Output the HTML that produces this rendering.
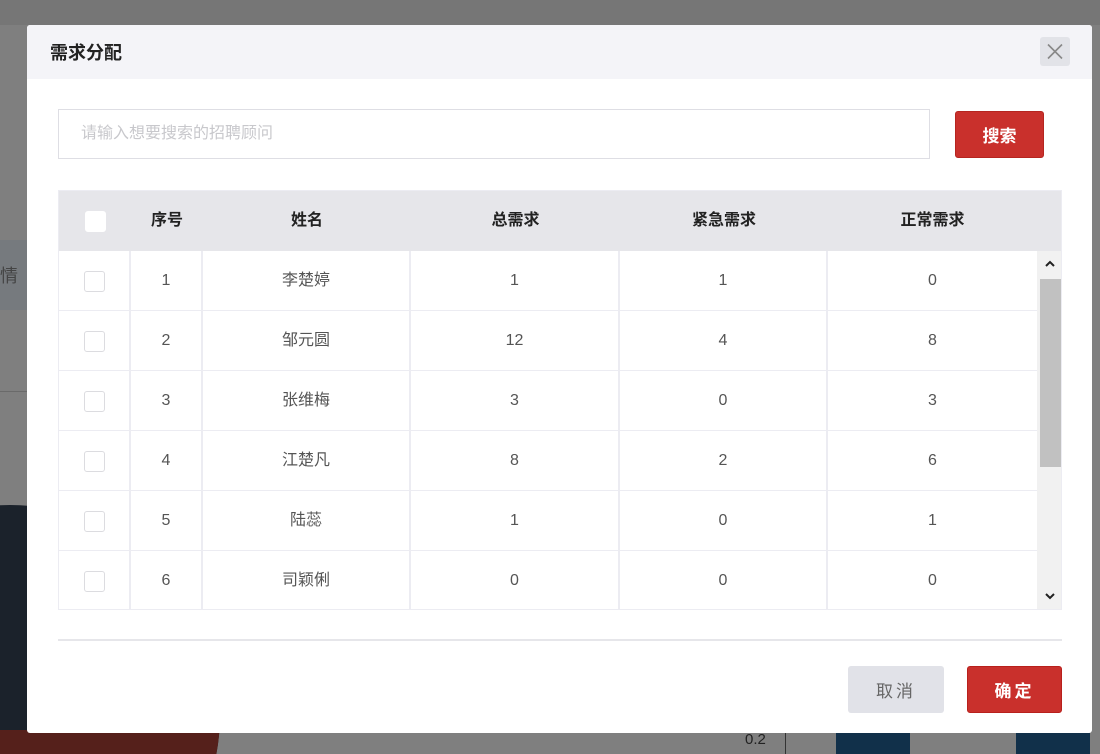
<!DOCTYPE html>
<html style="width:1100px;height:754px;overflow:hidden"><head><meta charset="utf-8"><style>
*{box-sizing:border-box;margin:0;padding:0}
body{width:1100px;height:754px;overflow:hidden;background:#7f7f7f;position:relative;font-family:"Liberation Sans","Noto Sans CJK SC",sans-serif}
.abs{position:absolute}
#wrap{position:absolute;left:0;top:0;width:1100px;height:754px;overflow:hidden}
.modal{left:27px;top:25px;width:1065px;height:708px;background:#fff;border-radius:3px}
.hd{left:0;top:0;width:1065px;height:54px;background:#f4f4f8;border-radius:3px 3px 0 0}
.cell{position:absolute;display:flex;align-items:center;justify-content:center;font-size:16px;color:#555;line-height:1}
.cb{width:21px;height:21px;border:1px solid #dcdce0;border-radius:3px;background:#fff}
</style></head><body>
<div id="wrap">
<div class="abs" style="left:0;top:0;width:1100px;height:25px;background:#767676"></div>
<div class="abs" style="left:0;top:240px;width:27px;height:70px;background:#767a7e"></div>
<div class="abs" style="left:0;top:264px;font-size:18px;line-height:24px;color:#444;">情</div>
<div class="abs" style="left:0;top:391px;width:27px;height:1px;background:#6a6a6a"></div>
<div class="abs" style="left:-200px;top:505px;width:420px;height:249px;overflow:hidden"><div class="abs" style="left:0;top:0;width:420px;height:420px;border-radius:50%;background:#1b222b;overflow:hidden"><div class="abs" style="left:0;top:225px;width:420px;height:200px;background:#55201b"></div></div></div>
<div class="abs" style="left:785px;top:733px;width:1px;height:21px;background:#333"></div>
<div class="abs" style="left:745px;top:731px;font-size:15px;line-height:18px;color:#222">0.2</div>
<div class="abs" style="left:836px;top:733px;width:74px;height:21px;background:#11304a"></div>
<div class="abs" style="left:1016px;top:733px;width:74px;height:21px;background:#11304a"></div>

<div class="abs modal">
 <div class="abs hd"></div>
 <div class="abs" style="left:23px;top:16px;font-size:18px;font-weight:bold;color:#222;line-height:24px">需求分配</div>
 <div class="abs" style="left:1013px;top:12px;width:30px;height:29px;background:#e2e3e8;border-radius:3px">
  <svg width="30" height="29"><path d="M8 7.5L22 21.5M22 7.5L8 21.5" stroke="#888" stroke-width="1.6"/></svg></div>
 <div class="abs" style="left:31px;top:84px;width:872px;height:50px;border:1px solid #dedee4;padding-left:22px;line-height:48px;font-size:16px;color:#c8c8cc">请输入想要搜索的招聘顾问</div>
 <div class="abs" style="left:928px;top:86px;width:89px;height:47px;background:#c9302c;border:1px solid #b52520;border-radius:3px;color:#fff;font-size:17px;font-weight:bold;display:flex;align-items:center;justify-content:center">搜索</div>

 <div class="abs" style="left:31px;top:165px;width:1004px;height:420px;border:1px solid #ececf2;overflow:hidden">
  <div class="abs" style="left:0;top:0;width:1004px;height:60px;background:#e6e6ea"></div>
  <div class="abs" style="left:978px;top:60px;width:26px;height:360px;background:#f1f1f1"></div>
  <div class="abs" style="left:981px;top:88px;width:21px;height:188px;background:#c1c1c1"></div>
  <svg class="abs" style="left:982px;top:66px" width="18" height="14"><path d="M5 9L9 5L13 9" stroke="#222" stroke-width="2" fill="none"/></svg>
  <svg class="abs" style="left:982px;top:398px" width="18" height="14"><path d="M5 5L9 9L13 5" stroke="#222" stroke-width="2" fill="none"/></svg>
  <div id="t"></div>
 </div>
 <div class="abs" style="left:31px;top:614px;width:1004px;height:2px;background:#e6e6ea"></div>
 <div class="abs" style="left:821px;top:641px;width:96px;height:47px;background:#e1e2e8;border-radius:3px;color:#666;font-size:17px;letter-spacing:3px;display:flex;align-items:center;justify-content:center">取消</div>
 <div class="abs" style="left:940px;top:641px;width:95px;height:47px;background:#c9302c;border:1px solid #b8201c;border-radius:3px;color:#fff;font-size:17px;font-weight:bold;letter-spacing:3px;display:flex;align-items:center;justify-content:center">确定</div>
</div>
</div>
<script>
var cols=[0,72,144,352,561,769,978];
var hd=["","序号","姓名","总需求","紧急需求","正常需求"];
var rows=[["1","李楚婷","1","1","0"],["2","邹元圆","12","4","8"],["3","张维梅","3","0","3"],["4","江楚凡","8","2","6"],["5","陆蕊","1","0","1"],["6","司颖俐","0","0","0"]];
var h="";
for(var i=0;i<6;i++){var w=cols[i+1]-cols[i];
 h+='<div class="cell" style="left:'+cols[i]+'px;top:0;width:'+w+'px;height:60px;color:#222;font-weight:bold">'+(i==0?'<div class="cb" style="border-color:#fff"></div>':hd[i])+'</div>';}
for(var r=0;r<6;r++){var y=60+r*60;
 h+='<div class="abs" style="left:0;top:'+(y+59)+'px;width:978px;height:1px;background:#ececf2"></div>';
 for(var i=0;i<6;i++){var w=cols[i+1]-cols[i];
  h+='<div class="cell" style="left:'+cols[i]+'px;top:'+y+'px;width:'+w+'px;height:60px;'+(i<5?'border-right:2px solid #ececf2':'')+'">'+(i==0?'<div class="cb"></div>':rows[r][i-1])+'</div>';}}
document.getElementById('t').outerHTML=h;
</script>
</body></html>
